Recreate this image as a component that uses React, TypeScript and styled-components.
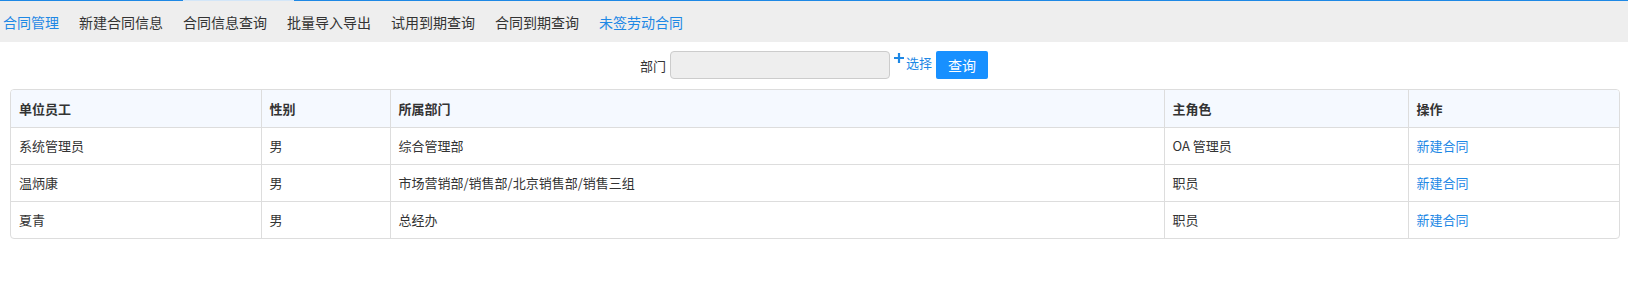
import styled, { createGlobalStyle } from 'styled-components';

const GlobalStyle = createGlobalStyle`
  html, body {
    margin: 0;
    padding: 0;
    background: #ffffff;
    font-family: "Noto Sans CJK SC", "Noto Sans", "Liberation Sans", sans-serif;
    color: #333333;
  }
`;

const Page = styled.div`
  width: 1628px;
  min-height: 295px;
  background: #ffffff;
`;

const TabBar = styled.nav`
  position: relative;
  display: flex;
  align-items: center;
  gap: 20px;
  height: 42px;
  padding-left: 3px;
  background: #eeeeee;
  border-top: 1px solid #1e88e5;
  box-sizing: border-box;
`;

// light segment over the blue line (hover trail of the tab strip)
const TopHighlight = styled.span`
  position: absolute;
  top: -1px;
  left: 183px;
  width: 111px;
  height: 1px;
  background: #d3e6f8;
`;

const Tab = styled.a<{ active?: boolean }>`
  font-size: 14px;
  line-height: 20px;
  color: ${(p) => (p.active ? '#1e88e5' : '#333333')};
  text-decoration: none;
  white-space: nowrap;
  cursor: pointer;
`;

const SearchRow = styled.div`
  display: flex;
  justify-content: center;
  align-items: center;
  height: 28px;
  margin: 9px 0 10px;
  font-size: 13px;
`;

const Label = styled.span`
  color: #333333;
  margin-right: 4px;
`;

const DeptInput = styled.input`
  width: 220px;
  height: 28px;
  box-sizing: border-box;
  background: #eeeeee;
  border: 1px solid #cccccc;
  border-radius: 4px;
  outline: none;
`;

const PickLink = styled.a`
  display: flex;
  align-items: flex-start;
  height: 28px;
  margin-left: 4px;
  color: #1e88e5;
  font-size: 13px;
  line-height: 24px;
  text-decoration: none;
  cursor: pointer;

  svg {
    margin-top: 2px;
    margin-right: 2px;
  }
`;

const QueryButton = styled.button`
  width: 52px;
  height: 28px;
  margin-left: 4px;
  background: #1890ff;
  color: #ffffff;
  border: none;
  border-radius: 2px;
  font-family: inherit;
  font-size: 14px;
  cursor: pointer;
`;

const TableWrap = styled.div`
  margin: 0 8px 0 10px;
  border: 1px solid #dddddd;
  border-radius: 4px;
  overflow: hidden;
`;

const Table = styled.table`
  width: 100%;
  border-collapse: collapse;
  table-layout: fixed;
  font-size: 13px;
`;

const HeadCell = styled.th<{ w?: number }>`
  box-sizing: border-box;
  width: ${(p) => (p.w ? `${p.w}px` : 'auto')};
  height: 37px;
  padding: 0 8px;
  text-align: left;
  font-weight: bold;
  background: #f5f9ff;
  border-bottom: 1px solid #dddddd;
  border-right: 1px solid #dddddd;
  &:last-child {
    border-right: none;
  }
`;

const Cell = styled.td`
  box-sizing: border-box;
  height: 37px;
  padding: 0 8px;
  border-bottom: 1px solid #dddddd;
  border-right: 1px solid #dddddd;
  &:last-child {
    border-right: none;
  }
  tr:last-child > & {
    border-bottom: none;
  }
`;

const RowLink = styled.a`
  color: #1e88e5;
  text-decoration: none;
  cursor: pointer;
`;

const tabs = [
  { label: '合同管理', active: true },
  { label: '新建合同信息' },
  { label: '合同信息查询' },
  { label: '批量导入导出' },
  { label: '试用到期查询' },
  { label: '合同到期查询' },
  { label: '未签劳动合同', active: true },
];

const rows = [
  { name: '系统管理员', sex: '男', dept: '综合管理部', role: 'OA 管理员' },
  { name: '温炳康', sex: '男', dept: '市场营销部/销售部/北京销售部/销售三组', role: '职员' },
  { name: '夏青', sex: '男', dept: '总经办', role: '职员' },
];

const PlusIcon = () => (
  <svg width="10" height="10" viewBox="0 0 10 10">
    <path d="M5 0v10M0 5h10" stroke="#1e88e5" strokeWidth="2.2" />
  </svg>
);

export default function App() {
  return (
    <Page>
      <GlobalStyle />
      <TabBar>
        <TopHighlight />
        {tabs.map((t) => (
          <Tab key={t.label} active={t.active}>
            {t.label}
          </Tab>
        ))}
      </TabBar>

      <SearchRow>
        <Label>部门</Label>
        <DeptInput readOnly />
        <PickLink>
          <PlusIcon />
          选择
        </PickLink>
        <QueryButton>查询</QueryButton>
      </SearchRow>

      <TableWrap>
        <Table>
          <thead>
            <tr>
              <HeadCell w={250}>单位员工</HeadCell>
              <HeadCell w={129}>性别</HeadCell>
              <HeadCell>所属部门</HeadCell>
              <HeadCell w={244}>主角色</HeadCell>
              <HeadCell w={211}>操作</HeadCell>
            </tr>
          </thead>
          <tbody>
            {rows.map((r) => (
              <tr key={r.name}>
                <Cell>{r.name}</Cell>
                <Cell>{r.sex}</Cell>
                <Cell>{r.dept}</Cell>
                <Cell>{r.role}</Cell>
                <Cell>
                  <RowLink>新建合同</RowLink>
                </Cell>
              </tr>
            ))}
          </tbody>
        </Table>
      </TableWrap>
    </Page>
  );
}
